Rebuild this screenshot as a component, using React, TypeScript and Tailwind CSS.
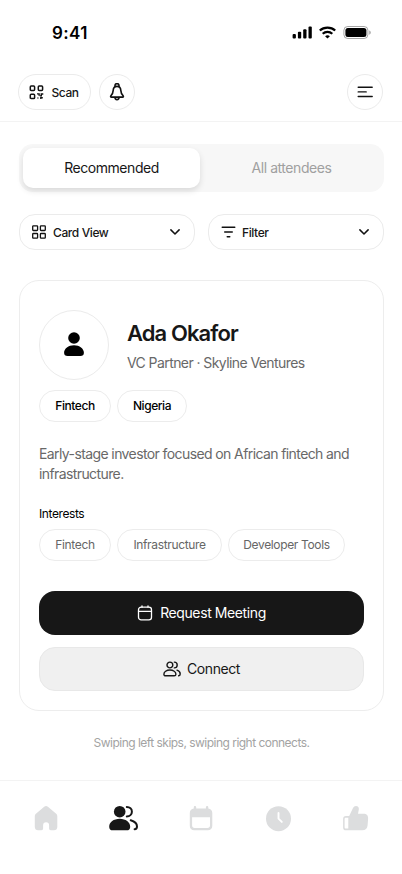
import React from 'react';

interface ChipProps {
  label: string;
  className: string;
}

const Chip: React.FC<ChipProps> = ({ label, className }) => (
  <span className={`flex h-8 items-center justify-center rounded-full border border-[#ececec] text-xs ${className}`}>
    {label}
  </span>
);

const ChevronIcon = () => (
  <svg width="10" height="6" viewBox="0 0 10 6" fill="none" stroke="#111" strokeWidth="1.5" strokeLinecap="round" strokeLinejoin="round">
    <path d="M.9.9 5 5 9.1.9" />
  </svg>
);

const StatusBar = () => (
  <div className="flex h-[74px] items-start justify-between pr-[31px] pl-[52px]">
    <span className="mt-[21px] text-[17px] leading-6 font-semibold tracking-[0.4px] text-black">9:41</span>
    <div className="mt-[26px] flex items-center gap-[7px]">
      <svg width="20" height="13" viewBox="0 0 20 13">
        <rect x=".6" y="8" width="3.3" height="4.6" rx="1" />
        <rect x="5.9" y="5.8" width="3.3" height="6.8" rx="1" />
        <rect x="11.2" y="3.2" width="3.3" height="9.4" rx="1" />
        <rect x="16.5" y=".5" width="3.3" height="12.1" rx="1" />
      </svg>
      <svg width="17" height="13" viewBox="0 0 17 13" fill="none" stroke="#000" strokeWidth="2.2">
        <path d="M.8 4.5C5 .6 12 .6 16.2 4.5" />
        <path d="M3.7 7.8c2.7-2.5 6.9-2.5 9.6 0" />
        <path d="M8.5 12.6 6.1 10.2c1.4-1.3 3.4-1.3 4.8 0Z" fill="#000" stroke="none" />
      </svg>
      <svg width="28" height="13" viewBox="0 0 28 13">
        <rect x=".9" y=".5" width="24" height="12" rx="3.8" fill="none" stroke="#000" strokeOpacity=".35" />
        <rect x="2.4" y="2" width="21" height="9" rx="2.5" />
        <path d="M26.3 4.5v4.2c.9-.4 1.4-1.2 1.4-2.1s-.5-1.7-1.4-2.1Z" fillOpacity=".4" />
      </svg>
    </div>
  </div>
);

const Header = () => (
  <header className="flex h-12 items-start justify-between border-b border-[#f3f3f3] pr-[19px] pl-[18.4px]">
    <div className="flex gap-2">
      <button className="flex h-9 w-[73px] items-center rounded-full border border-[#ebebeb] pl-[9.5px] text-xs font-medium tracking-[-0.4px]">
        <svg width="15" height="15" viewBox="0 0 15 15" fill="none" stroke="#111" strokeWidth="1.5">
          <rect x="1.3" y="1.1" width="4.3" height="4.3" rx=".9" />
          <rect x="9.3" y="1.1" width="4.3" height="4.3" rx=".9" />
          <rect x="1.3" y="9.3" width="4.3" height="4.3" rx=".9" />
          <path d="M8 8.9h2.1v1.9M14.3 9h-2v1.9h-1.5M8.9 13.6v-1M11.8 14.1v-1.4h2" strokeWidth="1.4" />
        </svg>
        <span className="mt-px ml-[7.5px]">Scan</span>
      </button>
      <button className="flex size-9 items-center justify-center rounded-full border border-[#ebebeb]">
        <svg width="16" height="18" viewBox="0 0 16 18" fill="none" stroke="#111" strokeWidth="1.6" strokeLinecap="round" strokeLinejoin="round">
          <path d="M6 3.5v-.9a2 2 0 0 1 4 0v.9" />
          <path d="M8 3.4c-2.3 0-3.7 1.7-3.8 4-.1 2.6-1 3.9-2.3 5.4-.6.7-.3 1.3.5 1.3h11.2c.8 0 1.1-.6.5-1.3-1.3-1.5-2.2-2.8-2.3-5.4-.1-2.3-1.5-4-3.8-4Z" />
          <path d="M6 14.6a2 2 0 0 0 4 0" />
        </svg>
      </button>
    </div>
    <button className="flex size-9 items-center justify-center rounded-full border border-[#ebebeb]">
      <svg width="16" height="12" viewBox="0 0 16 12" stroke="#111" strokeWidth="1.4" strokeLinecap="round">
        <path d="M1.2 1.3h14M1.2 5.9h8M1.2 10.5h14" />
      </svg>
    </button>
  </header>
);

const ProfileCard = () => (
  <section className="mt-[30px] h-[431px] rounded-[20px] border border-[#ededed] px-[19px] pt-[29px]">
    <div className="flex items-center">
      <div className="flex size-[70px] items-center justify-center rounded-full border border-[#ebebeb]">
        <svg width="20" height="24" viewBox="0 0 20 24" className="-mt-[2px]">
          <circle cx="10" cy="6" r="5.8" />
          <path d="M10 13.3c5.6 0 9.9 3.5 9.9 7.5 0 2.4-1.2 3.2-3.5 3.2H3.6C1.3 24 .1 23.2.1 20.8c0-4 4.3-7.5 9.9-7.5Z" />
        </svg>
      </div>
      <div className="ml-[18px]">
        <h1 className="text-[22px] leading-7 font-semibold tracking-[-0.9px]">Ada Okafor</h1>
        <p className="mt-[6px] -mb-px text-sm leading-5 tracking-[-0.58px] text-[#686868]">VC Partner · Skyline Ventures</p>
      </div>
    </div>
    <div className="mt-[10px] flex gap-[6px] font-medium tracking-[-0.45px] text-black">
      <Chip label="Fintech" className="w-[72px]" />
      <Chip label="Nigeria" className="w-[70px]" />
    </div>
    <p className="mt-[22px] text-sm leading-5 tracking-[-0.6px] whitespace-nowrap text-[#686868]">
      Early-stage investor focused on African fintech and
      <br />
      infrastructure.
    </p>
    <h2 className="mt-[22px] text-xs leading-4 font-normal tracking-[-0.4px] text-black">Interests</h2>
    <div className="mt-[7px] flex gap-[6px] tracking-[-0.35px] text-[#666]">
      <Chip label="Fintech" className="w-[72px]" />
      <Chip label="Infrastructure" className="w-[105px]" />
      <Chip label="Developer Tools" className="w-[117px]" />
    </div>
    <button className="mt-[30px] flex h-11 w-full items-center justify-center gap-[7px] rounded-2xl bg-[#171717] text-sm font-normal tracking-[-0.4px] text-white">
      <svg width="16" height="16" viewBox="0 0 16 16" fill="none" stroke="#fff" strokeWidth="1.3" strokeLinecap="round">
        <rect x="1.5" y="2.2" width="13" height="12.6" rx="2.6" />
        <path d="M1.5 6.3h13M5 .8v1.4M11 .8v1.4" />
      </svg>
      Request Meeting
    </button>
    <button className="mt-3 flex h-11 w-full items-center justify-center gap-[6px] rounded-2xl border border-[#e8e8e8] bg-[#f0f0f0] text-sm font-normal tracking-[-0.4px]">
      <svg width="18" height="16" viewBox="0 0 18 16" fill="none" stroke="#171717" strokeWidth="1.4" strokeLinecap="round">
        <circle cx="6.9" cy="4" r="2.9" />
        <path d="M6.9 9c3.4 0 6 2 6 4.2 0 1.2-.6 1.6-1.8 1.6H2.7c-1.2 0-1.8-.4-1.8-1.6C.9 11 3.5 9 6.9 9ZM11.3 1.1a2.9 2.9 0 0 1 0 5.8M14 9.2c2 .6 3.2 2 3.2 3.7 0 1.1-.5 1.7-1.5 1.9" />
      </svg>
      Connect
    </button>
  </section>
);

const BottomNav = () => (
  <nav className="flex h-[94px] items-start justify-between border-t border-[#f3f3f3] px-8 pt-[23px]">
    <svg width="28" height="28" viewBox="0 0 28 28" fill="#dcddde">
      <path d="M12.2 2.7a3 3 0 0 1 3.7 0l8 6.7c.9.8 1.4 1.7 1.4 2.9V23c0 2-1.3 3.3-3.3 3.3h-3.2c-1 0-1.7-.7-1.7-1.7v-3.2c0-2-1-3.2-3-3.2s-3 1.2-3 3.2v3.2c0 1-.7 1.700-1.700 1.700H6.100c-2 0-3.300-1.300-3.300-3.300V12.300c0-1.200.5-2.100 1.400-2.900Z" />
    </svg>
    <svg width="30" height="28" viewBox="1 0 30 28" fill="#171717">
      <circle cx="11.7" cy="7.7" r="5.8" />
      <path d="M11.7 14.8c6 0 10.5 3.6 10.5 7.9 0 2.5-1.2 3.6-3.7 3.6H4.9c-2.500 0-3.700-1.100-3.700-3.600 0-4.300 4.500-7.900 10.500-7.900Z" />
      <path d="M18.8 3c2.9 0 5.1 2 5.1 4.7s-2.2 4.7-5.1 4.700M22.700 16.300c4 1.200 6.300 3.600 6.300 6.200 0 1.600-.9 2.700-2.400 2.800" fill="none" stroke="#171717" strokeWidth="2" strokeLinecap="round" />
    </svg>
    <svg width="28" height="28" viewBox="1 0 28 28" fill="#dcddde">
      <path fillRule="evenodd" d="M8 2a1.2 1.2 0 0 1 1.2 1.2V4.5h9.7V3.2a1.2 1.2 0 0 1 2.4 0v1.300c2.500.4 4 2 4 4.500v12.800c0 2.900-1.700 4.500-4.500 4.500H7.300c-2.800 0-4.500-1.600-4.500-4.500V9c0-2.500 1.500-4.100 4-4.500V3.200C6.800 2.500 7.300 2 8 2ZM5.100 13.300v8.300c0 1.600.9 2.500 2.500 2.500h12.900c1.600 0 2.500-.9 2.500-2.500v-8.300Z" />
    </svg>
    <svg width="28" height="28" viewBox="1 0 28 28">
      <circle cx="14.5" cy="14.7" r="12.5" fill="#dcddde" />
      <path d="M14.5 9v5.6l3.3 3.3" fill="none" stroke="#fff" strokeWidth="1.9" strokeLinecap="round" strokeLinejoin="round" />
    </svg>
    <svg width="28" height="28" viewBox="0 0 28 28" fill="#dcddde">
      <path fillRule="evenodd" d="M7.2 12 11 4.1c.7-1.4 1.6-2.1 3-2.1 2 0 3.2 1.5 2.8 3.5l-.8 4.2h5.5c3.2 0 4.9 1.9 4.6 5l-.5 6.5c-.3 3.500-2 5.100-5.500 5.100H4c-1.900 0-2.900-1-2.900-2.900v-8.500c0-1.900 1-2.900 2.900-2.900ZM4 13.700c-.9 0-1.400.5-1.400 1.400v8.100c0 .9.500 1.400 1.400 1.400h2.300V13.700Z" />
    </svg>
  </nav>
);

export default function App() {
  return (
    <div className="h-[874px] w-[402px] overflow-hidden bg-white font-['Inter',sans-serif] text-[#171717]">
      <StatusBar />
      <Header />
      <main className="mt-[22px] h-[636px] pr-[18px] pl-[19px]">
        <div className="flex h-12 rounded-[14px] bg-[#f7f7f7] p-1 text-sm font-normal tracking-[-0.45px]">
          <button className="h-10 w-[177px] rounded-[10px] bg-white shadow-[0_3px_6px_rgba(0,0,0,0.12)]">Recommended</button>
          <button className="flex-1 pl-[3px] text-[#a0a0a0]">All attendees</button>
        </div>
        <div className="mt-[22px] flex justify-between text-xs font-medium tracking-[-0.4px]">
          <button className="flex h-9 w-44 items-center rounded-2xl border border-[#ebebeb] pr-[14px] pl-3">
            <svg width="14" height="14" viewBox="0 0 14 14" fill="none" stroke="#111" strokeWidth="1.3">
              <rect x=".7" y=".8" width="4.9" height="4.7" rx=".7" />
              <rect x="8.4" y=".8" width="4.9" height="4.7" rx=".7" />
              <rect x=".7" y="8.5" width="4.9" height="4.7" rx=".7" />
              <rect x="8.4" y="8.5" width="4.9" height="4.7" rx=".7" />
            </svg>
            <span className="mt-px mr-auto ml-[7px]">Card View</span>
            <ChevronIcon />
          </button>
          <button className="flex h-9 w-44 items-center rounded-2xl border border-[#ebebeb] pr-[14px] pl-3">
            <svg width="15" height="12" viewBox="0 0 15 12" stroke="#111" strokeWidth="1.4" strokeLinecap="round">
              <path d="M1.2 1.2h12.6M3.7 6h7.6M6.2 10.8h2.6" />
            </svg>
            <span className="mt-px mr-auto ml-[6px]">Filter</span>
            <ChevronIcon />
          </button>
        </div>
        <ProfileCard />
        <p className="mt-6 text-center text-xs leading-4 tracking-[-0.52px] text-[#a3a3a3]">Swiping left skips, swiping right connects.</p>
      </main>
      <BottomNav />
    </div>
  );
}
